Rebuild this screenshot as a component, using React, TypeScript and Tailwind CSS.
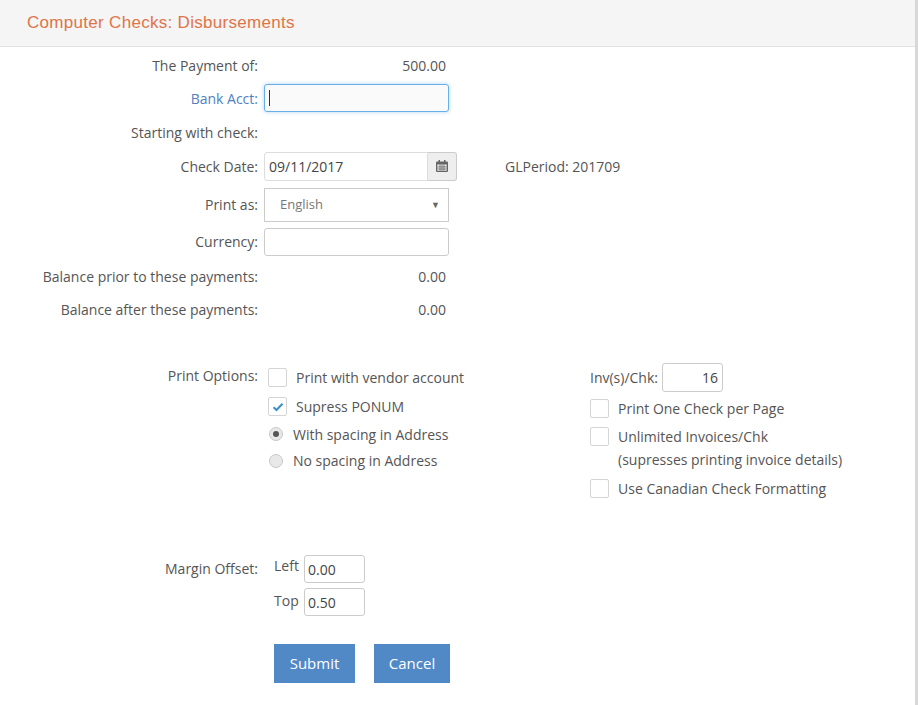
import React from "react";

const Box = ({ checked }: { checked?: boolean }) => (
  <span className="inline-flex h-[19px] w-[19px] items-center justify-center rounded-[2px] border border-[#d5d5d5] bg-white shrink-0">
    {checked && (
      <svg width="12" height="10" viewBox="0 0 12 10"><path d="M1.5 5.2 L4.5 8 L10.5 1.8" stroke="#3a8fc9" strokeWidth="2" fill="none" /></svg>
    )}
  </span>
);
const Radio = ({ checked }: { checked?: boolean }) => (
  <span className="inline-flex h-[14px] w-[14px] items-center justify-center rounded-full border border-[#c8c8c8] bg-[#e8e8e8] shrink-0">
    {checked && <span className="h-[6px] w-[6px] rounded-full bg-[#555]" />}
  </span>
);

const Row = ({ label, h, children, blue }: { label: string; h: string; children?: React.ReactNode; blue?: boolean }) => (
  <div className={`flex items-center ${h}`}>
    <div className={`w-[258px] text-right ${blue ? "text-[#4f7fbf]" : ""}`}>{label}</div>
    <div className="ml-[6px] flex items-center">{children}</div>
  </div>
);

export default function App() {
  return (
    <div className="h-[705px] w-[918px] bg-white text-[14px] text-[#555] border-r-[3px] border-[#d8d8d8]" style={{ fontFamily: '"Open Sans", sans-serif' }}>
      <div className="flex h-[47px] items-center border-b border-[#e2e2e2] bg-[#f5f5f5] pl-[27px] text-[17px] tracking-[0.3px] text-[#e07448]" style={{ fontFamily: '"Liberation Sans", Arial, sans-serif' }}>
        Computer Checks: Disbursements
      </div>
      <div className="pt-[6px]">
        <Row label="The Payment of:" h="h-[25px]"><span className="w-[182px] text-right">500.00</span></Row>
        <Row label="Bank Acct:" h="h-[40px]" blue>
          <div className="flex h-[28px] w-[185px] items-center rounded-[3px] border border-[#66afe9] bg-[#fafafa] pl-[4px] shadow-[0_0_4px_rgba(102,175,233,0.5)]"><span className="h-[16px] w-px bg-[#333]" /></div>
        </Row>
        <Row label="Starting with check:" h="h-[28px]" />
        <Row label="Check Date:" h="h-[40px]">
          <div className="flex h-[29px]">
            <div className="flex w-[164px] items-center rounded-l-[3px] border border-[#ddd] pl-[4px] text-[#444]">09/11/2017</div>
            <div className="flex w-[29px] items-center justify-center rounded-r-[3px] border border-l-0 border-[#ccc] bg-[#eee]">
              <svg width="12" height="12" viewBox="0 0 12 12" fill="#666"><rect x="0" y="1.5" width="12" height="10.5" rx="1" /><rect x="1.3" y="4.5" width="9.4" height="6.3" fill="#eee" /><g fill="#666"><rect x="1.3" y="6.5" width="9.4" height=".8"/><rect x="1.3" y="8.6" width="9.4" height=".8"/><rect x="3.6" y="4.5" width=".8" height="6.3"/><rect x="5.6" y="4.5" width=".8" height="6.3"/><rect x="7.6" y="4.5" width=".8" height="6.3"/></g><rect x="2.5" y="0" width="1.5" height="3" /><rect x="8" y="0" width="1.5" height="3" /></svg>
            </div>
          </div>
          <span className="ml-[48px]">GLPeriod: 201709</span>
        </Row>
        <Row label="Print as:" h="h-[37px]">
          <div className="flex h-[34px] w-[185px] items-center justify-between border border-[#ccc] pl-[15px] pr-[8px] text-[13px] text-[#777]">English<span className="text-[9px] text-[#666]">▼</span></div>
        </Row>
        <Row label="Currency:" h="h-[37px]">
          <div className="h-[28px] w-[185px] rounded-[3px] border border-[#ccc]" />
        </Row>
        <Row label="Balance prior to these payments:" h="h-[33px]"><span className="w-[182px] text-right">0.00</span></Row>
        <Row label="Balance after these payments:" h="h-[33px]"><span className="w-[182px] text-right">0.00</span></Row>

        <div className="mt-[37px] flex">
          <div className="w-[258px] pt-[2px] text-right">Print Options:</div>
          <div className="ml-[10px] flex w-[322px] flex-col">
            <div className="flex h-[29px] items-center gap-[9px]"><Box />Print with vendor account</div>
            <div className="flex h-[29px] items-center gap-[9px]"><Box checked />Supress PONUM</div>
            <div className="flex h-[26px] items-center gap-[10px] pl-[1px]"><Radio checked />With spacing in Address</div>
            <div className="flex h-[27px] items-center gap-[10px] pl-[1px]"><Radio />No spacing in Address</div>
          </div>
          <div className="flex flex-col">
            <div className="flex h-[29px] items-center gap-[4px]">Inv(s)/Chk:<div className="flex h-[29px] w-[61px] items-center justify-end rounded-[3px] border border-[#ccc] pr-[4px] text-[#444]">16</div></div>
            <div className="mt-[2px] flex h-[29px] items-center gap-[9px]"><Box />Print One Check per Page</div>
            <div className="mt-[2px] flex gap-[9px] leading-[23px]"><span className="mt-[2px]"><Box /></span><div>Unlimited Invoices/Chk<br />(supresses printing invoice details)</div></div>
            <div className="mt-[3px] flex h-[29px] items-center gap-[9px]"><Box />Use Canadian Check Formatting</div>
          </div>
        </div>

        <div className="mt-[52px] flex">
          <div className="w-[258px] pt-[3px] text-right">Margin Offset:</div>
          <div className="ml-[16px] flex flex-col gap-[5px]">
            <div className="flex items-start gap-[3px]"><span className="w-[27px]">Left</span><div className="flex h-[28px] w-[61px] items-center rounded-[3px] border border-[#ccc] pl-[3px] text-[#444]">0.00</div></div>
            <div className="flex items-start gap-[3px]"><span className="w-[27px] pt-[2px]">Top</span><div className="flex h-[28px] w-[61px] items-center rounded-[3px] border border-[#ccc] pl-[3px] text-[#444]">0.50</div></div>
          </div>
        </div>

        <div className="ml-[274px] mt-[28px] flex gap-[19px]">
          <button className="h-[39px] w-[81px] bg-[#5189c7] text-[15px] text-white">Submit</button>
          <button className="h-[39px] w-[76px] bg-[#5189c7] text-[15px] text-white">Cancel</button>
        </div>
      </div>
    </div>
  );
}
